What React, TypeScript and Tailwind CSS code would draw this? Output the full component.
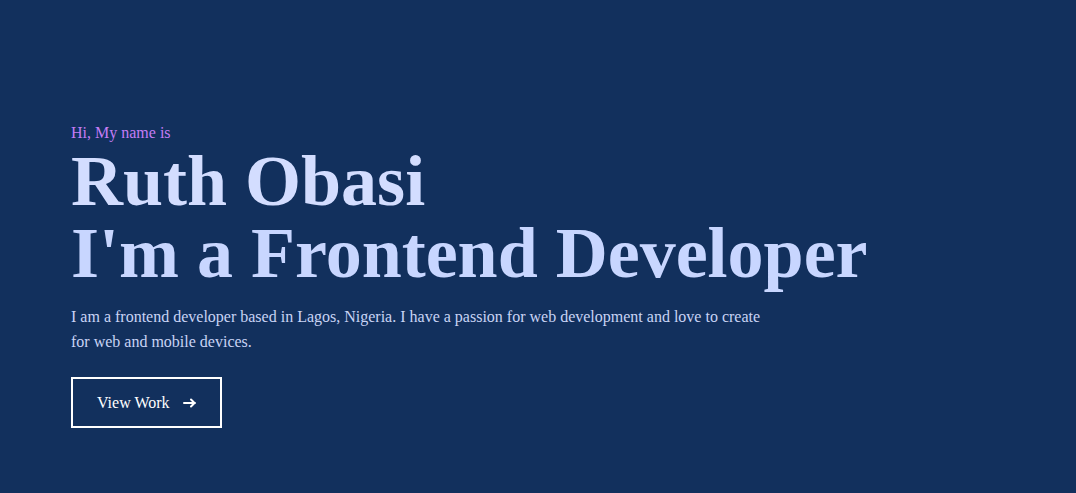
export default function App() {
  return (
    <div
      className="min-h-screen bg-[#12305d] pl-[71px] pt-[121px] pb-16"
      style={{ fontFamily: '"Liberation Serif", "Times New Roman", serif' }}
    >
      <p className="text-base leading-6 text-[#c47df5]">Hi, My name is</p>
      <h1 className="text-[72px] leading-[72px] font-bold text-[#d3ddff]">
        Ruth Obasi
      </h1>
      <h2 className="text-[72px] leading-[72px] font-bold text-[#c8d6ff]">
        I'm a Frontend Developer
      </h2>
      <p className="mt-[15px] max-w-[700px] text-base leading-[25px] text-[#c9d4f5]">
        I am a frontend developer based in Lagos, Nigeria. I have a passion for
        web development and love to create for web and mobile devices.
      </p>
      <a
        href="#work"
        className="mt-[23px] flex h-[51px] w-[151px] items-center gap-[13px] border-2 border-white pl-6 text-base text-white"
      >
        View Work
        <svg width="14" height="10" viewBox="0 0 14 10" fill="none">
          <path
            d="M1 5h11M8 1.5l3.5 3.5L8 8.5"
            stroke="white"
            strokeWidth="2"
            strokeLinecap="round"
            strokeLinejoin="round"
          />
        </svg>
      </a>
    </div>
  );
}
